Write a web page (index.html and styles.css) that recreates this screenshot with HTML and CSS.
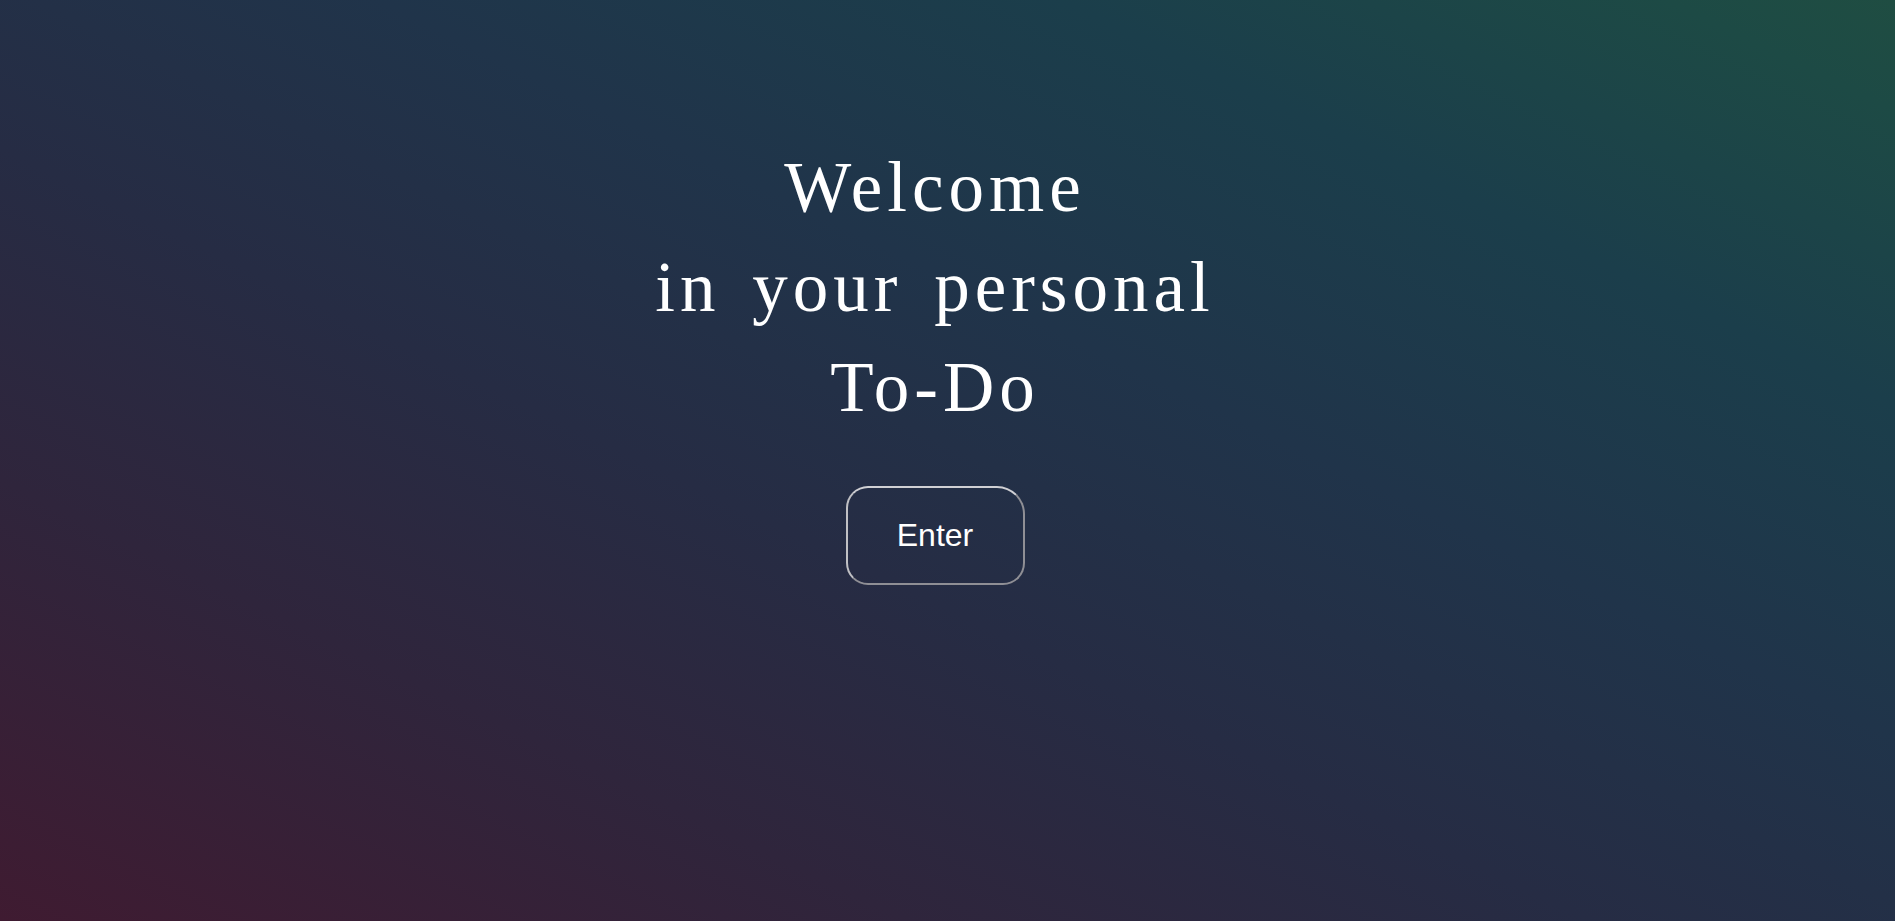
FILE: index.html
```html
<!DOCTYPE html>
<html lang="en">
<head>
<meta charset="utf-8">
<title>To-Do</title>
<link rel="stylesheet" href="styles.css">
</head>
<body>
<main class="welcome">
  <h1 class="welcome-title">
    <span class="line">Welcome</span>
    <span class="line">in your personal</span>
    <span class="line">To-Do</span>
  </h1>
  <button class="enter-btn" type="button">Enter</button>
</main>
</body>
</html>
```

FILE: styles.css
```css
html, body {
  margin: 0;
  height: 100%;
}
body {
  background: linear-gradient(to top right, #3f1b31 0%, #2f253c 24%, #262c44 42%, #20344a 60%, #1b3e4b 78%, #1d4a45 94%, #1f4d42 100%);
  color: #fff;
  overflow: hidden;
}
.welcome {
  display: flex;
  flex-direction: column;
  align-items: center;
  padding: 137px 25px 0 0;
}
.welcome-title {
  margin: 0;
  font-family: "Liberation Serif", "Times New Roman", serif;
  font-weight: 400;
  font-size: 71px;
  line-height: 100px;
  letter-spacing: 5px;
  word-spacing: 9px;
  text-align: center;
  display: flex;
  flex-direction: column;
  align-items: center;
}
.line {
  display: block;
}
.enter-btn {
  margin-top: 49px;
  width: 179px;
  height: 99px;
  background: transparent;
  color: #fff;
  font-family: "Liberation Sans", Arial, sans-serif;
  font-size: 32px;
  border: 2px solid #8f8f95;
  border-top-color: #d0d0d4;
  border-left-color: #c0c0c4;
  border-radius: 22px 28px 22px 22px;
  cursor: pointer;
  padding: 0;
}
```
